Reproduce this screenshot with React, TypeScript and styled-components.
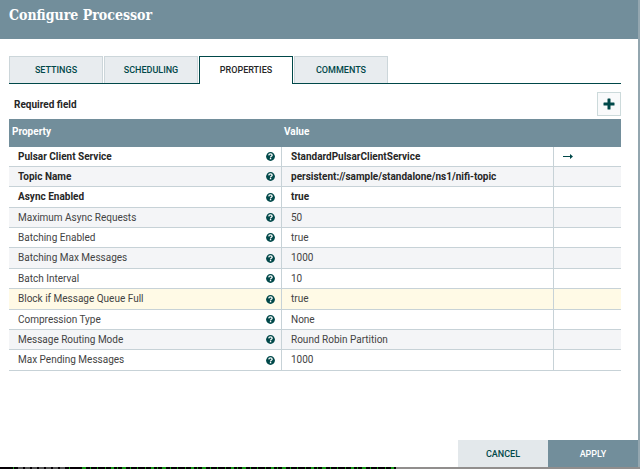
import React, { useState } from "react";
import styled, { createGlobalStyle } from "styled-components";

const GlobalStyle = createGlobalStyle`
  *, *::before, *::after { box-sizing: border-box; }
  html, body, #root { height: 100%; }
  body { margin: 0; background: #93a6af; font-family: Roboto, "Liberation Sans", sans-serif; font-size: 10px; color: #262626; }
  button { font: inherit; margin: 0; cursor: pointer; }
`;

const Screen = styled.div`
  min-height: 100%;
  display: flex;
  flex-direction: column;
`;

const Dialog = styled.section`
  flex: 1;
  display: flex;
  flex-direction: column;
  margin-right: 2px;
  background: #fff;
`;

const Header = styled.header`
  height: 39px;
  padding: 4px 9px;
  background: #728e9b;
`;

const Title = styled.h1`
  margin: 0;
  color: #fff;
  font: bold 14px/22px "Roboto Slab", "DejaVu Serif Condensed", "DejaVu Serif", serif;
`;

const Content = styled.div`
  flex: 1;
  padding: 17px 17px 0 9px;
`;

const TabList = styled.div`
  display: flex;
  gap: 1px;
  height: 28px;
  border-bottom: 1px solid #004849;
`;

const Tab = styled.button<{ $active: boolean }>`
  width: 94px;
  height: ${(p) => (p.$active ? 28 : 27)}px;
  padding: 0 0 ${(p) => (p.$active ? 1 : 0)}px;
  border: 1px solid ${(p) => (p.$active ? "#004849" : "#ccd6da")};
  border-bottom: 0;
  background: ${(p) => (p.$active ? "#fff" : "#e8ecef")};
  color: ${(p) => (p.$active ? "#262626" : "#004849")};
  font-weight: 500;
  font-size: 9px;
  text-transform: uppercase;
`;

const Toolbar = styled.div`
  display: flex;
  align-items: center;
  justify-content: space-between;
  height: 35px;
  padding: 5px 0 0 5px;
`;

const RequiredLabel = styled.span`
  font-weight: 700;
`;

const AddButton = styled.button`
  display: grid;
  place-items: center;
  width: 24px;
  height: 24px;
  padding: 0;
  border: 1px solid #ccdadb;
  background: #f9fafb;
`;

const Grid = styled.table`
  width: 100%;
  table-layout: fixed;
  border-collapse: separate;
  border-spacing: 0;
`;

const PropertyCol = styled.col` width: 273px; `;
const ActionCol = styled.col` width: 67px; `;

const HeadCell = styled.th`
  height: 28px;
  padding: 0 2px 3px;
  &:first-child { padding-left: 3px; }
  background: #728e9b;
  color: #fff;
  font-weight: 700;
  text-align: left;
`;

const Row = styled.tr<{ $required?: boolean; $hover?: boolean }>`
  height: 20px;
  color: ${(p) => (p.$required ? "#262626" : "#434343")};
  font-weight: ${(p) => (p.$required ? 700 : 400)};
  background: ${(p) => (p.$hover ? "#fffae6" : "#fff")};
  &:nth-child(even) { background: ${(p) => (p.$hover ? "#fffae6" : "#f4f5f7")}; }
  &:nth-child(3), &:nth-child(6), &:nth-child(8), &:nth-child(11) { height: 21px; }
`;

const Cell = styled.td`
  padding: 0 6px 0 9px;
  border-bottom: 1px solid #c7d2d7;
  border-right: 1px solid #c7d2d7;
  line-height: 12px;
  white-space: nowrap;
  &:last-child { border-right: 0; }
`;

const NameLayout = styled.div`
  display: flex;
  align-items: center;
  justify-content: space-between;
`;

const IconButton = styled.button`
  display: flex;
  padding: 0;
  border: 0;
  background: none;
`;

const Actions = styled.footer`
  display: flex;
  justify-content: flex-end;
`;

const ActionButton = styled.button<{ $primary?: boolean }>`
  width: 90px;
  height: 27px;
  padding: 0;
  border: 0;
  background: ${(p) => (p.$primary ? "#728e9b" : "#e3e8eb")};
  color: ${(p) => (p.$primary ? "#fff" : "#004849")};
  font-size: 9px;
  font-weight: 500;
  text-transform: uppercase;
`;

const Backdrop = styled.div`
  display: flex;
  height: 2px;
  background: #918e8d;
`;

const TerminalEdge = styled.svg`
  width: 396px;
  height: 2px;
  background: #050005;
`;

const HelpIcon = () => (
  <svg width="9" height="9" viewBox="0 0 18 18" aria-hidden="true">
    <circle cx="9" cy="9" r="8.8" fill="#004849" />
    <path d="M5.500 6.800C5.700 4.500 7.200 3.800 9 3.800c2 0 3.300 1 3.300 2.700 0 2-3.200 2-3.200 4.300" fill="none" stroke="#fff" strokeWidth="2.600" />
    <path d="M7.700 12h2.800v2.600H7.700z" fill="#fff" />
  </svg>
);

const PlusIcon = () => (
  <svg width="12" height="12" viewBox="0 0 12 12" aria-hidden="true">
    <path d="M4.500 1q0-.5.5-.5h2q.5 0 .5.5v3.500H11q.5 0 .5.5v2q0 .5-.5.5H7.500V11q0 .5-.5.5H5q-.5 0-.5-.5V7.500H1Q.5 7.500.5 7V5q0-.5.5-.5h3.500z" fill="#004849" />
  </svg>
);

const ArrowIcon = () => (
  <svg width="10" height="7" viewBox="0 0 10 7" aria-hidden="true">
    <path d="M0 2.900h7V1L10 3.500 7 6V4.100H0z" fill="#004849" />
  </svg>
);

const tabs = ["Settings", "Scheduling", "Properties", "Comments"];

const properties = [
  { name: "Pulsar Client Service", value: "StandardPulsarClientService", required: true, link: true },
  { name: "Topic Name", value: "persistent://sample/standalone/ns1/nifi-topic", required: true },
  { name: "Async Enabled", value: "true", required: true },
  { name: "Maximum Async Requests", value: "50" },
  { name: "Batching Enabled", value: "true" },
  { name: "Batching Max Messages", value: "1000" },
  { name: "Batch Interval", value: "10" },
  { name: "Block if Message Queue Full", value: "true", hover: true },
  { name: "Compression Type", value: "None" },
  { name: "Message Routing Mode", value: "Round Robin Partition" },
  { name: "Max Pending Messages", value: "1000" },
];

export default function App() {
  const [active, setActive] = useState("Properties");
  return (
    <>
      <GlobalStyle />
      <Screen>
        <Dialog role="dialog" aria-labelledby="dialog-title">
          <Header>
            <Title id="dialog-title">Configure Processor</Title>
          </Header>
          <Content>
            <TabList role="tablist">
              {tabs.map((tab) => (
                <Tab key={tab} role="tab" aria-selected={tab === active} $active={tab === active} onClick={() => setActive(tab)}>
                  {tab}
                </Tab>
              ))}
            </TabList>
            <Toolbar>
              <RequiredLabel>Required field</RequiredLabel>
              <AddButton aria-label="New property"><PlusIcon /></AddButton>
            </Toolbar>
            <Grid>
              <colgroup>
                <PropertyCol />
                <col />
                <ActionCol />
              </colgroup>
              <thead>
                <tr>
                  <HeadCell scope="col">Property</HeadCell>
                  <HeadCell scope="col">Value</HeadCell>
                  <HeadCell aria-label="Actions" />
                </tr>
              </thead>
              <tbody>
                {properties.map((p) => (
                  <Row key={p.name} $required={p.required} $hover={p.hover}>
                    <Cell>
                      <NameLayout>
                        {p.name}
                        <IconButton aria-label={`About ${p.name}`}><HelpIcon /></IconButton>
                      </NameLayout>
                    </Cell>
                    <Cell>{p.value}</Cell>
                    <Cell>{p.link && <IconButton aria-label="Go to service"><ArrowIcon /></IconButton>}</Cell>
                  </Row>
                ))}
              </tbody>
            </Grid>
          </Content>
          <Actions>
            <ActionButton>Cancel</ActionButton>
            <ActionButton $primary>Apply</ActionButton>
          </Actions>
        </Dialog>
        <Backdrop aria-hidden="true">
          <TerminalEdge viewBox="0 0 396 2">
            <path d="M18 1H66" stroke="#555" strokeWidth="2" strokeDasharray="5 2" />
            <path d="M13 1h1M69 1h1" stroke="#149614" strokeWidth="2" />
            <path d="M82 1H394" stroke="#149614" strokeWidth="2" strokeDasharray="4 4 1 6 1 7 1 5 3 3 1 4" />
          </TerminalEdge>
        </Backdrop>
      </Screen>
    </>
  );
}
